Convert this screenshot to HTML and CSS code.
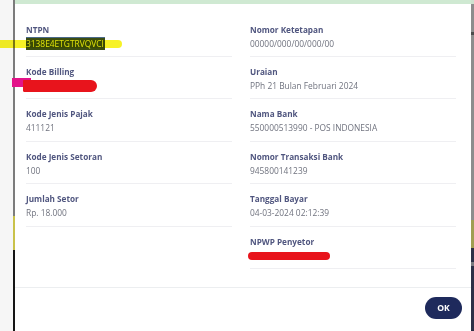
FILE: index.html
```html
<!DOCTYPE html>
<html lang="id">
<head>
<meta charset="utf-8">
<title>Detail Pembayaran</title>
<link rel="stylesheet" href="styles.css">
</head>
<body>
<div class="screen">
  <div class="gutter-left"></div>
  <div class="edge-left"></div>
  <div class="main">
    <div class="topbar"></div>
    <div class="modal">
      <div class="modal-body">
        <div class="grid">
          <div class="col">
            <div class="row">
              <div class="label">NTPN</div>
              <div class="value"><span class="selected">3138E4ETGTRVQVCI</span></div>
            </div>
            <div class="row">
              <div class="label">Kode Billing</div>
              <div class="value"><span class="scribble-pink"></span><span class="scribble scribble-billing"></span>&nbsp;</div>
            </div>
            <div class="row">
              <div class="label">Kode Jenis Pajak</div>
              <div class="value">411121</div>
            </div>
            <div class="row">
              <div class="label">Kode Jenis Setoran</div>
              <div class="value">100</div>
            </div>
            <div class="row">
              <div class="label">Jumlah Setor</div>
              <div class="value">Rp. 18.000</div>
            </div>
          </div>
          <div class="col">
            <div class="row">
              <div class="label">Nomor Ketetapan</div>
              <div class="value">00000/000/00/000/00</div>
            </div>
            <div class="row">
              <div class="label">Uraian</div>
              <div class="value">PPh 21 Bulan Februari 2024</div>
            </div>
            <div class="row">
              <div class="label">Nama Bank</div>
              <div class="value">550000513990 - POS INDONESIA</div>
            </div>
            <div class="row">
              <div class="label">Nomor Transaksi Bank</div>
              <div class="value">945800141239</div>
            </div>
            <div class="row">
              <div class="label">Tanggal Bayar</div>
              <div class="value">04-03-2024 02:12:39</div>
            </div>
            <div class="row">
              <div class="label">NPWP Penyetor</div>
              <div class="value"><span class="scribble scribble-npwp"></span>&nbsp;</div>
            </div>
          </div>
        </div>
      </div>
      <div class="modal-footer">
        <button class="btn-ok" type="button">OK</button>
      </div>
    </div>
  </div>
  <div class="edge-right"></div>
  <div class="highlight-yellow"></div>
</div>
</body>
</html>
```

FILE: styles.css
```css
* { box-sizing: border-box; }

html, body {
  margin: 0;
  padding: 0;
  background: #f4f4f4;
}

body {
  font-family: "Open Sans", "Noto Sans", sans-serif;
}

.screen {
  position: relative;
  display: flex;
  width: 474px;
  height: 331px;
  overflow: hidden;
}

.gutter-left {
  width: 13px;
  flex: none;
  background: #f6f6f6;
}

.edge-left {
  width: 2px;
  flex: none;
  background: linear-gradient(to bottom,
    #7c7c7c 0, #7c7c7c 216px,
    #c9c24a 216px, #c9c24a 250px,
    #151515 250px, #151515 331px);
}

.main {
  flex: 1;
  display: flex;
  flex-direction: column;
  min-width: 0;
}

.topbar {
  height: 4px;
  flex: none;
  background: #cfe9d2;
}

.modal {
  flex: 1;
  background: #ffffff;
  display: flex;
  flex-direction: column;
}

.modal-body {
  padding: 10.6px 15px 18px 11px;
}

.grid {
  display: grid;
  grid-template-columns: 206px 206px;
  column-gap: 18px;
  align-items: start;
}

.row {
  padding: 7px 0 5.4px;
  border-bottom: 1px solid #efeff2;
}

.label {
  font-size: 8.2px;
  line-height: 15px;
  font-weight: 700;
  color: #50567f;
}

.value {
  position: relative;
  font-size: 8.4px;
  line-height: 14px;
  color: #70737f;
  white-space: nowrap;
}

.selected {
  display: inline-block;
  background: #3b4d10;
  color: #e9f03a;
  line-height: 12px;
  padding: 0 1px 0 0;
  border-top: 1px solid #4a6a8a;
}

.scribble {
  position: absolute;
  background: #e8141c;
  border-radius: 10px;
}

.scribble-billing {
  left: -3px;
  top: 1px;
  width: 74px;
  height: 12px;
  border-radius: 4px 30px 30px 8px;
}

.scribble-pink {
  position: absolute;
  left: -14px;
  top: -1px;
  width: 19px;
  height: 9px;
  background: #e3148a;
}

.scribble-npwp {
  left: -2px;
  top: 3px;
  width: 82px;
  height: 8px;
  border-radius: 6px;
}

.modal-footer {
  border-top: 1px solid #eceef0;
  padding: 9px 9px 0 0;
  display: flex;
  justify-content: flex-end;
}

.btn-ok {
  width: 37px;
  height: 22px;
  border: none;
  border-radius: 11px;
  background: #1e2a5c;
  color: #ffffff;
  font-family: "Open Sans", "Noto Sans", sans-serif;
  font-size: 8.6px;
  font-weight: 700;
  padding: 0;
}

.edge-right {
  width: 3px;
  flex: none;
  background: linear-gradient(to bottom,
    #cfe2d0 0, #cfe2d0 4px,
    #8d8d8d 4px, #8d8d8d 32px,
    #4c4c4c 32px, #4c4c4c 35px,
    #8d8d8d 35px, #8d8d8d 220px,
    #a09e52 220px, #a09e52 248px,
    #2d3047 248px, #2d3047 262px,
    #7a7a80 262px, #7a7a80 266px,
    #2d3047 266px, #2d3047 331px);
}

.highlight-yellow {
  position: absolute;
  left: 0;
  top: 40px;
  width: 122px;
  height: 8px;
  background: rgba(246, 240, 0, 0.85);
  border-radius: 0 4px 4px 0;
  mix-blend-mode: multiply;
}
```
